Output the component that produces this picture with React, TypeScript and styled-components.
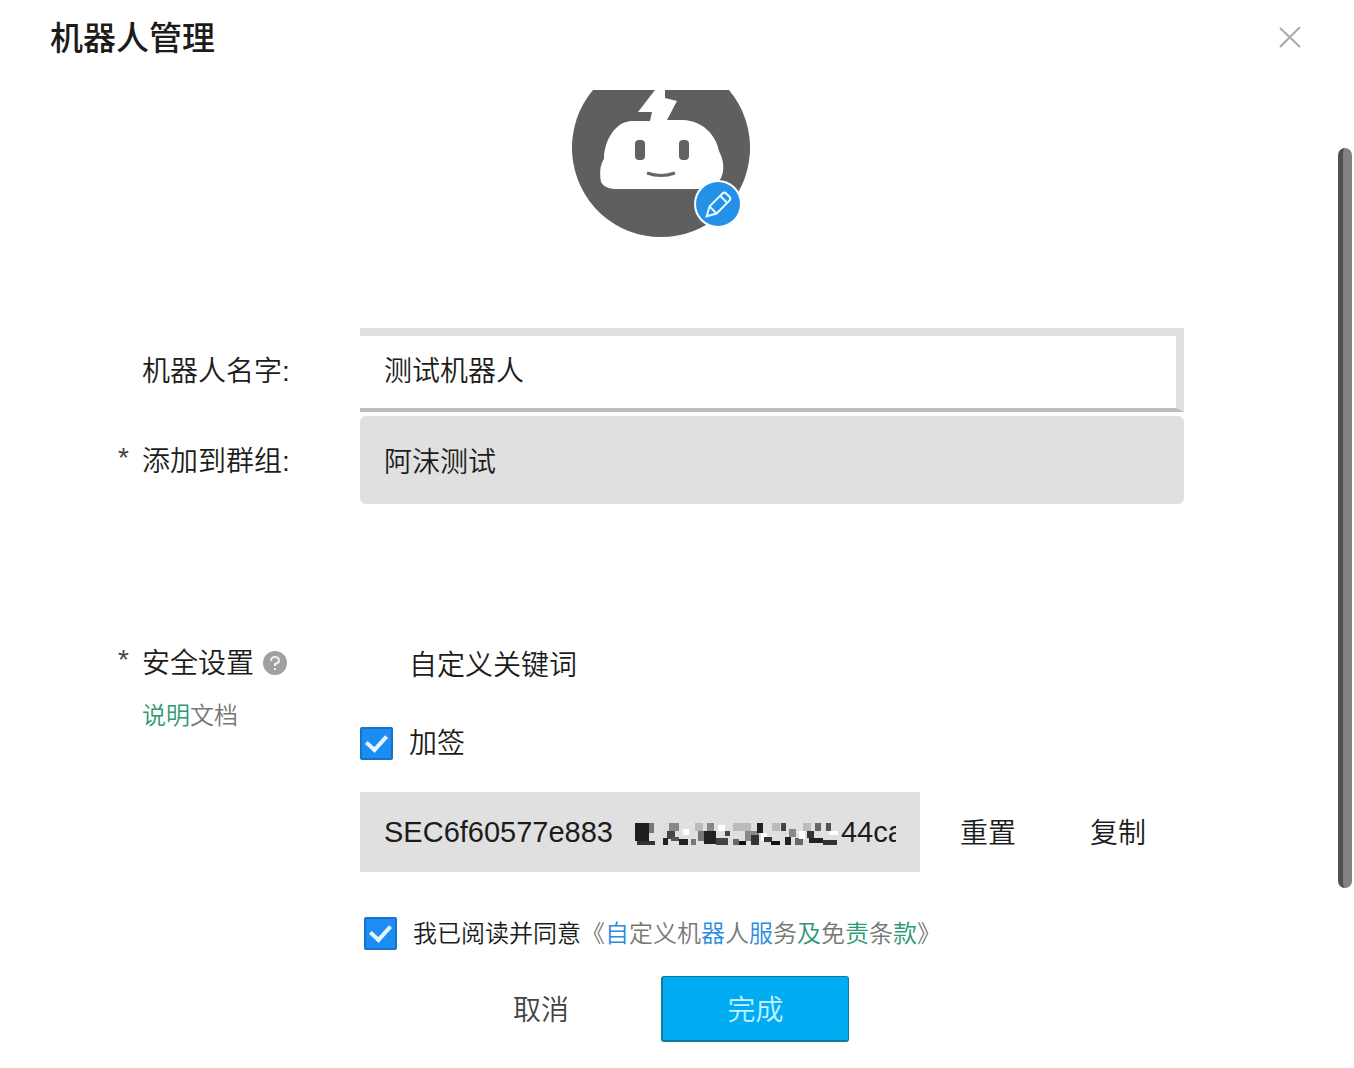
import React from "react";
import styled, { createGlobalStyle } from "styled-components";

const ink = "#1c1c1c";
const fill = "#e0e0e0";
const blue = "#1c8df5";

const GlobalStyle = createGlobalStyle`
  * { box-sizing: border-box; }
  body {
    margin: 0;
    background: #fff;
    color: ${ink};
    font-family: "Liberation Sans", "Noto Sans CJK SC", sans-serif;
    font-size: 28px;
    font-weight: 350;
    line-height: 40px;
  }
  button, input { font: inherit; color: inherit; }
`;

const Dialog = styled.main`
  display: flex;
  flex-direction: column;
  min-height: 100vh;
`;

const Header = styled.header`
  display: flex;
  align-items: center;
  justify-content: space-between;
  height: 90px;
  padding: 0 52px 12px 50px;
`;

const Title = styled.h1`
  margin: 0;
  font-size: 33px;
  font-weight: 500;
`;

const PlainButton = styled.button`
  padding: 4px 0 0;
  border: 0;
  background: transparent;
  cursor: pointer;
`;

const IconButton = styled(PlainButton)`
  display: flex;
  padding: 0;
`;

const Body = styled.div`
  display: flex;
  flex: 1;
`;

const Form = styled.form`
  flex: 1;
  min-width: 0;
`;

const Rail = styled.div`
  width: 16px;
  padding: 58px 2px 0 0;
`;

const Thumb = styled.div`
  height: 740px;
  border-left: 5px solid #505050;
  border-radius: 8px;
  background: #828282;
`;

const AvatarRow = styled.div`
  display: flex;
  justify-content: center;
  padding-right: 16px;
  margin-bottom: 90px;
`;

const Row = styled.div<{ $gap: number }>`
  display: grid;
  grid-template-columns: 242px 1fr;
  padding: 0 154px 0 118px;
  margin-bottom: ${(p) => p.$gap}px;
`;

const LabelCell = styled.div<{ $center?: boolean }>`
  display: grid;
  grid-template-columns: 24px 1fr;
  align-content: ${(p) => (p.$center ? "center" : "start")};
  padding-top: ${(p) => (p.$center ? 4 : 0)}px;
`;

const Star = styled.span`
  color: #444;
  line-height: 32px;
`;

const Heading = styled.span`
  display: flex;
  align-items: center;
  gap: 8px;
`;

const DocLink = styled.a`
  grid-column: 2;
  margin-top: 12px;
  font-size: 24px;
  text-decoration: none;
`;

const TextField = styled.input`
  width: 100%;
  height: 84px;
  padding: 0 24px 6px;
  border: 0 solid ${fill};
  border-width: 8px 8px 4px 0;
  border-bottom-color: #bdbdbd;
  background: #fff;
  outline: none;
`;

const FilledField = styled(TextField)`
  height: 88px;
  padding: 0 24px;
  border: 0;
  border-radius: 6px;
  background: ${fill};
`;

const Options = styled.div`
  display: flex;
  flex-direction: column;
  gap: 36px;
`;

const CheckLabel = styled.label`
  display: flex;
  align-items: center;
  gap: 16px;
`;

const CheckText = styled.span`
  padding-top: 2px;
`;

const Checkbox = styled.input`
  appearance: none;
  display: grid;
  place-items: center;
  width: 33px;
  height: 33px;
  margin: 0;
  border: 2px solid #fff;
  border-radius: 2px;

  &:checked {
    border-color: #1774c4;
    background: ${blue};
  }
  &:checked::after {
    content: "";
    width: 9px;
    height: 16px;
    margin-bottom: 4px;
    border: solid #e4f6ff;
    border-width: 0 4px 4px 0;
    transform: rotate(42deg);
  }
`;

const SecretRow = styled.div`
  display: flex;
  align-items: center;
  gap: 40px;
  padding: 0 192px 0 360px;
  margin-bottom: 40px;
`;

const SecretBox = styled.output`
  display: flex;
  flex: 1;
  align-items: center;
  min-width: 0;
  height: 80px;
  padding: 0 24px;
  background: ${fill};
  font-size: 29px;
`;

const SecretText = styled.span`
  display: flex;
  align-items: center;
  overflow: hidden;
  white-space: nowrap;
`;

const Mosaic = styled.svg`
  flex: none;
  margin: 4px 2px 0 22px;
`;

const Actions = styled.div`
  display: flex;
  gap: 74px;
`;

const Agreement = styled.div`
  display: flex;
  align-items: center;
  padding: 0 0 0 364px;
  margin-bottom: 22px;
  font-size: 24px;
`;

const TermsLink = styled.a`
  padding-top: 2px;
  text-decoration: none;
`;

const Tone = styled.span<{ $color: string }>`
  color: ${(p) => p.$color};
`;

const Footer = styled.footer`
  display: flex;
  justify-content: center;
  gap: 26px;
  padding: 0 42px 26px 0;
`;

const CancelButton = styled(PlainButton)`
  width: 188px;
  height: 66px;
  color: #444;
`;

const DoneButton = styled(CancelButton)`
  border: solid #147a9c;
  border-width: 1px 1px 2px 2px;
  border-radius: 3px;
  background: #00adf2;
  color: #c4f2ff;
`;

const gray = "#777";
const azure = "#2b8bdc";
const green = "#2f9874";

const terms: [string, string][] = [
  ["《", gray],
  ["自", azure],
  ["定义机", gray],
  ["器", azure],
  ["人", gray],
  ["服", azure],
  ["务", gray],
  ["及", green],
  ["免", gray],
  ["责", green],
  ["条", gray],
  ["款", green],
  ["》", gray],
];

// Cells of the mask over the secret: x, y, width, height, shade.
const cells: [number, number, number, number, string][] = [
  [0, 0, 14, 18, "#1f1f1f"], [14, 0, 5, 10, "#777"], [2, 18, 18, 4, "#333"],
  [28, 0, 4, 12, "#ddd"], [34, 0, 10, 8, "#888"], [32, 8, 8, 8, "#444"], [28, 15, 5, 7, "#222"],
  [36, 14, 8, 4, "#555"], [44, 16, 9, 6, "#222"], [48, 6, 6, 6, "#fff"], [56, 16, 5, 6, "#777"],
  [60, 0, 8, 8, "#bbb"], [63, 8, 8, 10, "#777"], [69, 8, 12, 13, "#222"], [72, 0, 7, 8, "#888"],
  [81, 15, 12, 7, "#444"], [83, 2, 7, 6, "#fff"], [90, 8, 5, 5, "#444"], [98, 0, 18, 8, "#bbb"],
  [98, 16, 6, 6, "#666"], [104, 18, 7, 4, "#111"], [110, 8, 14, 10, "#888"], [116, 12, 8, 10, "#333"],
  [122, 0, 6, 10, "#222"], [126, 10, 6, 8, "#fff"], [129, 14, 8, 5, "#333"], [137, 0, 8, 8, "#bbb"],
  [136, 18, 9, 4, "#111"], [146, 0, 5, 8, "#444"], [150, 14, 6, 8, "#222"], [154, 6, 7, 8, "#888"],
  [160, 15, 8, 7, "#666"], [168, 0, 8, 8, "#bbb"], [164, 8, 6, 8, "#fff"], [172, 8, 7, 7, "#333"],
  [174, 15, 14, 5, "#222"], [180, 0, 6, 8, "#666"], [188, 17, 14, 5, "#333"], [191, 0, 5, 8, "#555"],
  [194, 8, 9, 4, "#fff"],
];

function Avatar() {
  return (
    <svg width="180" height="148" viewBox="0 0 180 148" aria-hidden="true">
      <path d="M22 0H158A90 90 0 0 1 150 124Q124 147 90 147Q56 147 30 124A90 90 0 0 1 22 0Z" fill="#5f5f5f" />
      <path d="M30 92C29 86 28 76 33 69C33 51 44 32 60 31H79L81 22H67L84 0H94V8L106 11L96 30H112C132 31 145 45 148 61C155 75 153 86 146 94Q143 99 136 99H43Q33 98 30 92Z" fill="#fff" />
      <rect x="64" y="50" width="10" height="20" rx="4" fill="#626262" />
      <rect x="108" y="50" width="10" height="20" rx="4" fill="#626262" />
      <path d="M76 83Q90 88 104 83" fill="none" stroke="#666" strokeWidth="3" />
      <circle cx="147" cy="114" r="24" fill="#fff" />
      <circle cx="147" cy="114" r="22" fill="#2491e8" />
      <g transform="rotate(45 147 115)" fill="none" stroke="#e8fbff" strokeWidth="2">
        <path d="M142 104V122L147 131L152 122V104Q152 101 149 101H145Q142 101 142 104Z" />
        <path d="M142 107H152M142 122H152" />
      </g>
    </svg>
  );
}

export default function App() {
  return (
    <>
      <GlobalStyle />
      <Dialog>
        <Header>
          <Title>机器人管理</Title>
          <IconButton type="button" aria-label="关闭">
            <svg width="24" height="24" viewBox="0 0 24 24" fill="none" stroke="#aaa" strokeWidth="2">
              <path d="M2 1L22 20M22 0L2 20" />
            </svg>
          </IconButton>
        </Header>
        <Body>
          <Form onSubmit={(e) => e.preventDefault()}>
            <AvatarRow>
              <IconButton type="button" aria-label="修改头像">
                <Avatar />
              </IconButton>
            </AvatarRow>

            <Row $gap={4}>
              <LabelCell $center>
                <span />
                <label htmlFor="robot-name">机器人名字:</label>
              </LabelCell>
              <TextField id="robot-name" defaultValue="测试机器人" />
            </Row>

            <Row $gap={140}>
              <LabelCell $center>
                <Star>*</Star>
                <label htmlFor="robot-group">添加到群组:</label>
              </LabelCell>
              <FilledField id="robot-group" readOnly value="阿沫测试" />
            </Row>

            <Row $gap={28}>
              <LabelCell>
                <Star>*</Star>
                <Heading>
                  安全设置
                  <svg width="26" height="26" viewBox="0 0 26 26" aria-hidden="true">
                    <circle cx="13" cy="12" r="12" fill="#a0a0a0" />
                    <path d="M9 10Q9 6 13 6Q17 6 17 10Q17 12 13 13V15M13 17V19" fill="none" stroke="#eee" strokeWidth="2" />
                  </svg>
                </Heading>
                <DocLink href="#docs">
                  <Tone $color={green}>说明</Tone>
                  <Tone $color={gray}>文档</Tone>
                </DocLink>
              </LabelCell>
              <Options>
                <CheckLabel>
                  <Checkbox type="checkbox" />
                  <CheckText>自定义关键词</CheckText>
                </CheckLabel>
                <CheckLabel>
                  <Checkbox type="checkbox" defaultChecked />
                  <CheckText>加签</CheckText>
                </CheckLabel>
              </Options>
            </Row>

            <SecretRow>
              <SecretBox aria-label="加签">
                <SecretText>
                  SEC6f60577e883
                  <Mosaic width="204" height="22" viewBox="0 0 204 22" aria-hidden="true">
                    {cells.map(([x, y, w, h, shade], i) => (
                      <rect key={i} x={x} y={y} width={w} height={h} fill={shade} />
                    ))}
                  </Mosaic>
                  44ca
                </SecretText>
              </SecretBox>
              <Actions>
                <PlainButton type="button">重置</PlainButton>
                <PlainButton type="button">复制</PlainButton>
              </Actions>
            </SecretRow>

            <Agreement>
              <CheckLabel>
                <Checkbox type="checkbox" defaultChecked />
                <CheckText>我已阅读并同意</CheckText>
              </CheckLabel>
              <TermsLink href="#terms">
                {terms.map(([text, color], i) => (
                  <Tone key={i} $color={color}>{text}</Tone>
                ))}
              </TermsLink>
            </Agreement>

            <Footer>
              <CancelButton type="button">取消</CancelButton>
              <DoneButton type="submit">完成</DoneButton>
            </Footer>
          </Form>
          <Rail>
            <Thumb />
          </Rail>
        </Body>
      </Dialog>
    </>
  );
}
